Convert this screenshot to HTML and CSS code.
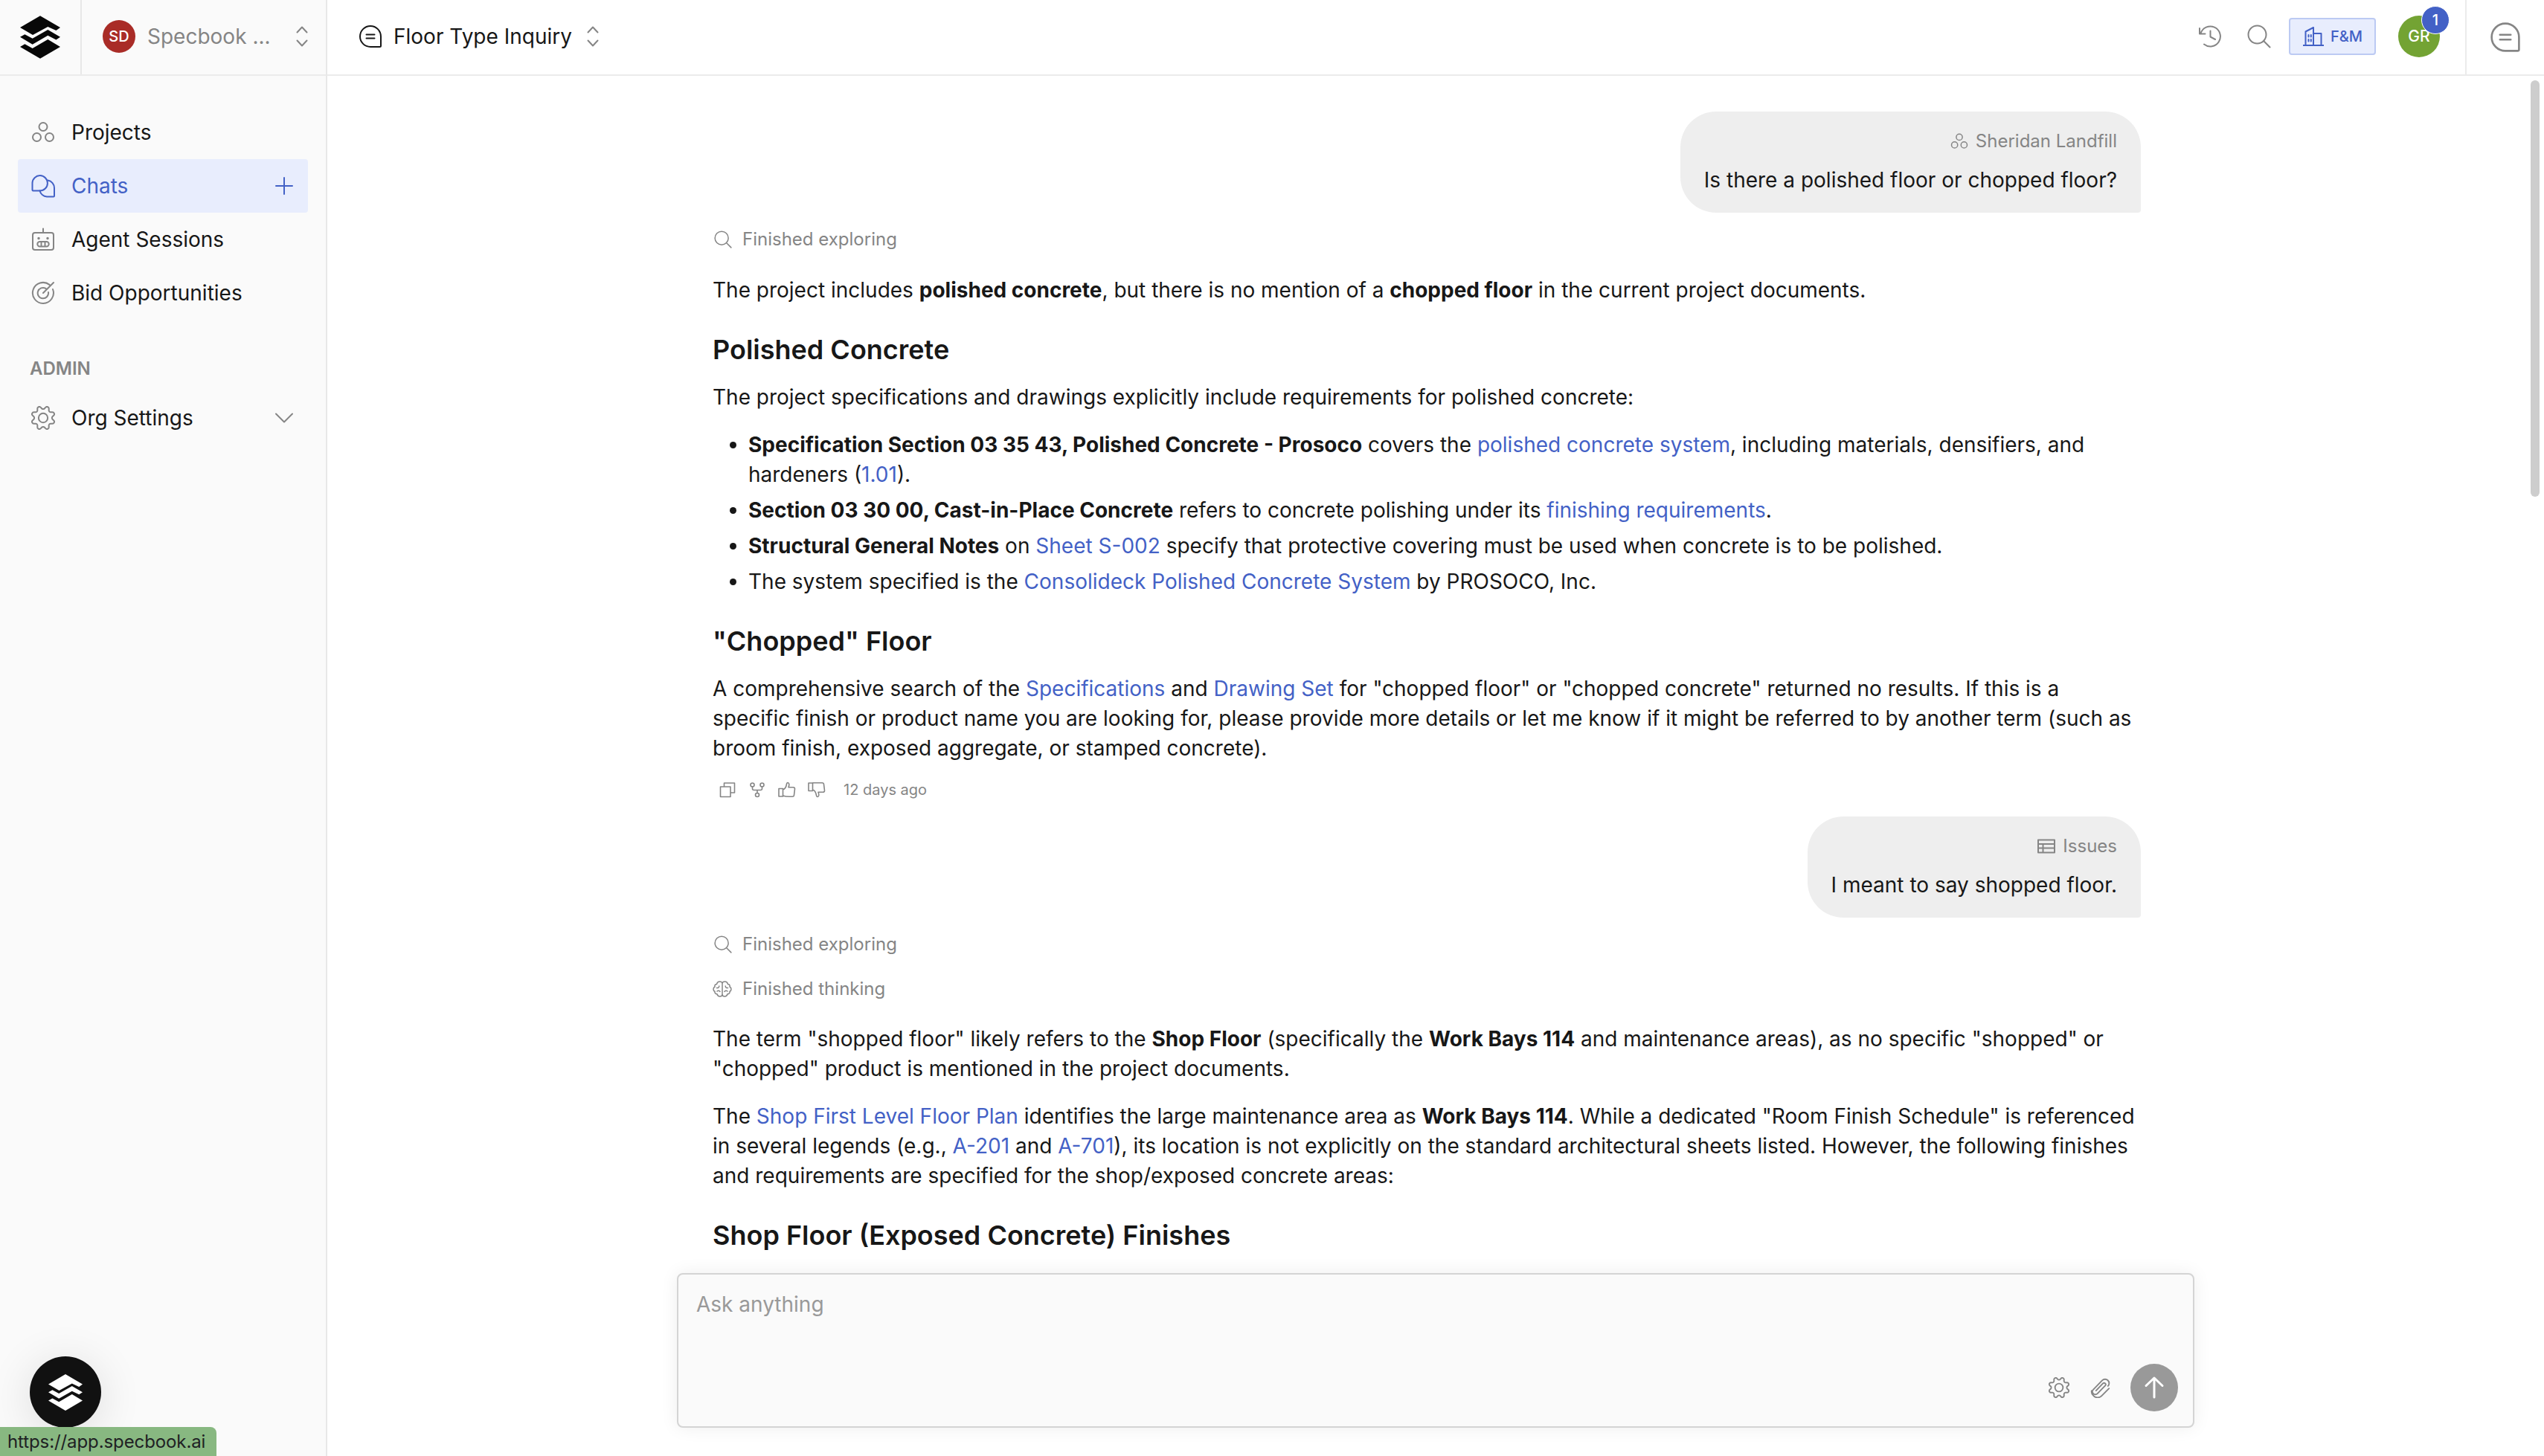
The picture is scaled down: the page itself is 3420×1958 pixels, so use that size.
FILE: index.html
```html
<!DOCTYPE html>
<html lang="en">
<head>
    <meta charset="UTF-8">
    <meta name="viewport" content="width=device-width, initial-scale=1.0">
    <title>Floor Type Inquiry - Specbook</title>
    <link rel="stylesheet" href="styles.css">
</head>
<body>
    <!-- Shared icons -->
    <svg class="sprite">
        <symbol id="logo" viewBox="0 0 136 145">
            <path d="M68 0l68 40-14 10-28-13-51 28L0 40z"/>
            <path d="M0 72l16-9 26 14 52-30 42 25-14 9-28-14-52 30z"/>
            <path d="M0 105l16-9 26 14 52-30 42 25-68 40z"/>
        </symbol>
        <symbol id="selector" viewBox="0 0 16 28">
            <path d="M1.5 8.500L8 1.500l6.500 7M1.500 19.500l6.500 7 6.500-7"/>
        </symbol>
        <symbol id="projects" viewBox="0 0 32 32">
            <circle cx="16" cy="8.500" r="5.500"/><circle cx="7.500" cy="22.500" r="5.500"/><circle cx="24.500" cy="22.500" r="5.500"/>
        </symbol>
        <symbol id="chat" viewBox="0 0 32 32">
            <path d="M2 16a14 14 0 0 1 28 0v12.500a1.500 1.500 0 0 1-1.500 1.500H16A14 14 0 0 1 2 16zM10.500 13.500h11M10.500 18.500h11"/>
        </symbol>
        <symbol id="search" viewBox="0 0 32 32">
            <circle cx="13.500" cy="13.500" r="12"/><path d="M22.300 22.300l8.200 8.200"/>
        </symbol>
        <symbol id="cog" viewBox="0 0 24 24">
            <circle cx="12" cy="12" r="4.600"/>
            <path d="M10.546 2.438a1.957 1.957 0 0 0 2.908 0L14.400 1.400a1.959 1.959 0 0 1 3.410 1.413l-.071 1.400a1.958 1.958 0 0 0 2.051 2.054l1.400-.071a1.959 1.959 0 0 1 1.410 3.410l-1.042.940a1.960 1.960 0 0 0 0 2.909l1.042.940a1.959 1.959 0 0 1-1.413 3.410l-1.400-.071a1.958 1.958 0 0 0-2.056 2.056l.071 1.400A1.959 1.959 0 0 1 14.400 22.600l-.941-1.041a1.959 1.959 0 0 0-2.908 0L9.606 22.600A1.959 1.959 0 0 1 6.200 21.192l.072-1.400a1.958 1.958 0 0 0-2.056-2.056l-1.400.071A1.958 1.958 0 0 1 1.400 14.400l1.041-.940a1.960 1.960 0 0 0 0-2.909L1.400 9.606A1.958 1.958 0 0 1 2.809 6.200l1.400.071a1.958 1.958 0 0 0 2.058-2.060L6.200 2.810A1.959 1.959 0 0 1 9.606 1.400z"/>
        </symbol>
    </svg>

    <div class="app">
        <!-- Sidebar -->
        <aside class="sidebar">
            <div class="sidebar-header">
                <a class="brand" href="#"><svg class="brand-logo"><use href="#logo"/></svg></a>
                <div class="org-switcher">
                    <span class="avatar avatar-org">SD</span>
                    <span class="org-name">Specbook ...</span>
                    <svg class="icon selector"><use href="#selector"/></svg>
                </div>
            </div>
            <nav class="nav">
                <a class="nav-item" href="#">
                    <svg class="icon nav-icon"><use href="#projects"/></svg>
                    <span>Projects</span>
                </a>
                <a class="nav-item active" href="#">
                    <svg class="icon nav-icon" viewBox="0 0 32 32">
                        <path d="M1.500 12a10.200 10.200 0 1 1 10.200 10.500H2.500a1 1 0 0 1-1-1z"/>
                        <path d="M22.300 8.500A10.500 10.500 0 0 1 31 19v10.500a1 1 0 0 1-1 1h-9a10.500 10.500 0 0 1-9.500-8"/>
                    </svg>
                    <span>Chats</span>
                    <svg class="icon nav-plus" viewBox="0 0 24 24"><path d="M12 1v22M1 12h22"/></svg>
                </a>
                <a class="nav-item" href="#">
                    <svg class="icon nav-icon" viewBox="0 0 32 32">
                        <rect x="2" y="7" width="28" height="23" rx="3"/>
                        <path d="M16 7V1.500M11.500 19h9a3.200 3.200 0 0 1 0 6.400h-9a3.200 3.200 0 0 1 0-6.400zM13.500 19v6M18.500 19v6"/>
                        <path class="dots" d="M10 14.500h.01M22 14.500h.01"/>
                    </svg>
                    <span>Agent Sessions</span>
                </a>
                <a class="nav-item" href="#">
                    <svg class="icon nav-icon" viewBox="0 0 32 32">
                        <path d="M24.500 4.900A14 14 0 1 0 29 11M19.500 9.900A7.200 7.200 0 1 0 23 15M16 16L30 2"/>
                    </svg>
                    <span>Bid Opportunities</span>
                </a>
                <div class="nav-heading">ADMIN</div>
                <a class="nav-item" href="#">
                    <svg class="icon nav-icon nav-cog"><use href="#cog"/></svg>
                    <span>Org Settings</span>
                    <svg class="icon nav-chevron" viewBox="0 0 24 14"><path d="M1 1.500l11 11 11-11"/></svg>
                </a>
            </nav>
        </aside>

        <main class="main">
            <!-- Top bar -->
            <header class="topbar">
                <div class="chat-title">
                    <svg class="icon chat-icon"><use href="#chat"/></svg>
                    <span>Floor Type Inquiry</span>
                    <svg class="icon selector"><use href="#selector"/></svg>
                </div>
                <div class="topbar-actions">
                    <svg class="icon" viewBox="0 0 32 32">
                        <path d="M3.500 12A13.500 13.500 0 1 1 8 26.500M2 5v7.500h7.500M16.500 8.500v8l6.500 3.500"/>
                    </svg>
                    <svg class="icon top-search"><use href="#search"/></svg>
                    <button class="fm-button">
                        <svg class="icon fm-icon" viewBox="0 0 28 26">
                            <path d="M.500 25h27M3.500 25V6.500L14 1v24M14 9h10.500v16M7.500 11v2.500M10.800 11v2.500M7.500 17v2.500M10.800 17v2.500"/>
                        </svg>
                        F&amp;M
                    </button>
                    <div class="avatar avatar-user">GR<span class="badge">1</span></div>
                </div>
                <div class="panel-toggle">
                    <svg class="icon panel-icon"><use href="#chat"/></svg>
                </div>
            </header>

            <!-- Conversation -->
            <div class="messages">
                <div class="thread">
                    <div class="bubble">
                        <div class="bubble-context">
                            <svg class="icon"><use href="#projects"/></svg>Sheridan Landfill
                        </div>
                        <div>Is there a polished floor or chopped floor?</div>
                    </div>

                    <div class="status"><svg class="icon"><use href="#search"/></svg>Finished exploring</div>

                    <div class="answer">
                        <p>The project includes <strong>polished concrete</strong>, but there is no mention of a <strong>chopped floor</strong> in the current project documents.</p>
                        <h2>Polished Concrete</h2>
                        <p>The project specifications and drawings explicitly include requirements for polished concrete:</p>
                        <ul>
                            <li><strong>Specification Section 03 35 43, Polished Concrete - Prosoco</strong> covers the <a href="#">polished concrete system</a>, including materials, densifiers, and hardeners (<a href="#">1.01</a>).</li>
                            <li><strong>Section 03 30 00, Cast-in-Place Concrete</strong> refers to concrete polishing under its <a href="#">finishing requirements</a>.</li>
                            <li><strong>Structural General Notes</strong> on <a href="#">Sheet S-002</a> specify that protective covering must be used when concrete is to be polished.</li>
                            <li>The system specified is the <a href="#">Consolideck Polished Concrete System</a> by PROSOCO, Inc.</li>
                        </ul>
                        <h2>"Chopped" Floor</h2>
                        <p>A comprehensive search of the <a href="#">Specifications</a> and <a href="#">Drawing Set</a> for "chopped floor" or "chopped concrete" returned no results. If this is a specific finish or product name you are looking for, please provide more details or let me know if it might be referred to by another term (such as broom finish, exposed aggregate, or stamped concrete).</p>
                    </div>

                    <div class="message-actions">
                        <svg class="icon" viewBox="0 0 24 24"><path d="M2.500 8h13.500v13.500H2.500zM7.500 8V3h14v13H16"/></svg>
                        <svg class="icon" viewBox="0 0 24 24">
                            <circle cx="5.500" cy="5.500" r="2.500"/><circle cx="18.500" cy="5.500" r="2.500"/><circle cx="12" cy="19" r="2.500"/>
                            <path d="M5.500 8v2.500a2 2 0 0 0 2 2h9a2 2 0 0 0 2-2V8M12 12.500v4"/>
                        </svg>
                        <svg class="icon" viewBox="0 0 24 24">
                            <path d="M1 10.500h5.500V21H1zM6.500 12c3-1 4.500-4.500 5-7.500.2-1.400.7-2.200 1.700-2 2 .4 2 3 .8 6.200h6.500a2 2 0 0 1 2 2.200l-1 8.300a2.200 2.200 0 0 1-2.200 2C14 21.500 10 21.500 6.500 20"/>
                        </svg>
                        <svg class="icon" viewBox="0 0 24 24">
                            <path d="M1 3h5.500v10.500H1zM6.500 12c3 1 4.500 4.500 5 7.500.2 1.400.7 2.200 1.700 2 2-.4 2-3 .8-6.200h6.500a2 2 0 0 0 2-2.200l-1-8.300a2.200 2.200 0 0 0-2.200-2H6.500"/>
                        </svg>
                        <span>12 days ago</span>
                    </div>

                    <div class="bubble">
                        <div class="bubble-context">
                            <svg class="icon" viewBox="0 0 24 24"><path d="M1 3.500h22v17H1zM1 9h22M1 14.500h22M7.500 9v11.500"/></svg>Issues
                        </div>
                        <div>I meant to say shopped floor.</div>
                    </div>

                    <div class="status"><svg class="icon"><use href="#search"/></svg>Finished exploring</div>
                    <div class="status status-thinking">
                        <svg class="icon brain" viewBox="0 0 26 22">
                            <path d="M13 4c0-2-1.500-3-3.500-3S6 2.500 5.500 4.500C3.500 4.500 2.500 6 3 8c-1.500.7-2 1.800-2 3.200s.8 2.600 2 3.100c-.5 2 .8 3.500 3 3.500.5 2 1.800 3.200 3.700 3.200 2 0 3.300-1.200 3.300-3zM13 4c0-2 1.500-3 3.500-3S20 2.500 20.500 4.500c2 0 3 1.500 2.500 3.500 1.500.7 2 1.800 2 3.200s-.8 2.600-2 3.100c.5 2-.8 3.500-3 3.500-.5 2-1.800 3.200-3.700 3.200-2 0-3.300-1.200-3.300-3z"/>
                            <path d="M5.500 9.500c2 .3 3.200-.6 3.300-2.500M20.500 9.500c-2 .3-3.200-.6-3.300-2.500M6 14c1.500-1.200 3-1 4 .5M20 14c-1.500-1.200-3-1-4 .5"/>
                        </svg>Finished thinking
                    </div>

                    <div class="answer answer-second">
                        <p>The term "shopped floor" likely refers to the <strong>Shop Floor</strong> (specifically the <strong>Work Bays 114</strong> and maintenance areas), as no specific "shopped" or "chopped" product is mentioned in the project documents.</p>
                        <p>The <a href="#">Shop First Level Floor Plan</a> identifies the large maintenance area as <strong>Work Bays 114</strong>. While a dedicated "Room Finish Schedule" is referenced in several legends (e.g., <a href="#">A-201</a> and <a href="#">A-701</a>), its location is not explicitly on the standard architectural sheets listed. However, the following finishes and requirements are specified for the shop/exposed concrete areas:</p>
                        <h2>Shop Floor (Exposed Concrete) Finishes</h2>
                    </div>
                </div>
            </div>

            <!-- Composer -->
            <div class="composer">
                <div class="composer-input">Ask anything</div>
                <div class="composer-actions">
                    <svg class="icon composer-icon"><use href="#cog"/></svg>
                    <svg class="icon composer-icon" viewBox="0 0 24 24">
                        <path d="M7.500 15.500l8-8.300a1.800 1.800 0 0 1 2.600 2.600l-9 9.200a3.300 3.300 0 0 1-4.700-4.700L14.600 3.800a4.600 4.600 0 0 1 6.700 6.400M22.500 13l-8.300 8.300a6.500 6.500 0 0 1-9.500.2 6 6 0 0 1-2.200-6"/>
                    </svg>
                    <button class="send">
                        <svg class="icon" viewBox="0 0 32 32"><path d="M16 29V3M5 13.500L16 3l11 10.500"/></svg>
                    </button>
                </div>
            </div>

            <div class="scrollbar"></div>
        </main>
    </div>

    <!-- Floating launcher and link preview -->
    <div class="launcher"><svg><use href="#logo"/></svg></div>
    <div class="link-status">https://app.specbook.ai</div>
</body>
</html>
```
FILE: styles.css
```css
* {
    box-sizing: border-box;
}

body {
    margin: 0;
    font-family: Inter, "Liberation Sans", sans-serif;
    font-size: 28px;
    line-height: 40px;
    color: #171717;
    background-color: #fff;
}

a {
    color: #4361c6;
    text-decoration: none;
}

button {
    font: inherit;
    padding: 0;
    border: none;
}

.sprite {
    display: none;
}

.icon {
    flex: none;
    width: 32px;
    height: 32px;
    fill: none;
    stroke: currentColor;
    stroke-width: 2;
    stroke-linecap: round;
    stroke-linejoin: round;
}

.app {
    display: flex;
    height: 1958px;
    overflow: hidden;
}

/* Sidebar */
.sidebar {
    flex: none;
    width: 440px;
    background-color: #fafafa;
    border-right: 2px solid #e8e8e8;
}

.sidebar-header {
    display: flex;
    height: 102px;
    border-bottom: 2px solid #ebebeb;
}

.brand {
    display: flex;
    align-items: center;
    justify-content: center;
    width: 110px;
    border-right: 2px solid #e8e8e8;
    padding-bottom: 1px;
}

.brand-logo {
    width: 54px;
    height: 58px;
    fill: #080808;
}

.org-switcher {
    flex: 1;
    min-width: 0;
    display: flex;
    align-items: center;
    padding: 0 24px 2px 28px;
    color: #858585;
}

.org-name {
    margin-left: 16px;
    white-space: nowrap;
}

.selector {
    width: 16px;
    height: 28px;
    margin-left: auto;
    color: #858585;
}

.avatar {
    flex: none;
    display: flex;
    align-items: center;
    justify-content: center;
    border-radius: 50%;
    color: #fff;
    font-weight: 500;
}

.avatar-org {
    width: 44px;
    height: 44px;
    font-size: 20px;
    background-color: #a92c27;
}

.nav {
    padding: 40px 24px;
}

.nav-item {
    display: flex;
    align-items: center;
    height: 72px;
    padding: 0 20px 0 18px;
    border-radius: 4px;
    color: #171717;
}

.nav-item.active {
    background-color: #e8edfd;
    color: #4361c6;
}

.nav-icon {
    margin-right: 22px;
    color: #858585;
}

.nav-cog {
    stroke-width: 1.5;
}

.active .nav-icon {
    color: inherit;
}

.dots {
    stroke-width: 3.5;
}

.nav-plus {
    width: 24px;
    height: 24px;
    margin-left: auto;
}

.nav-chevron {
    width: 24px;
    height: 14px;
    margin-left: auto;
    color: #858585;
}

.nav-heading {
    padding: 46px 16px 10px;
    font-size: 24px;
    font-weight: 600;
    color: #858585;
}

/* Main column */
.main {
    flex: 1;
    position: relative;
    display: flex;
    flex-direction: column;
    align-items: center;
}

.topbar {
    flex: none;
    display: flex;
    align-items: center;
    width: 100%;
    height: 102px;
    border-bottom: 2px solid #ebebeb;
}

.chat-title {
    display: flex;
    align-items: center;
    padding: 0 0 2px 42px;
}

.chat-icon {
    margin-right: 15px;
}

.chat-title .selector {
    margin-left: 20px;
}

.topbar-actions {
    display: flex;
    align-items: center;
    margin-left: auto;
    padding-bottom: 2px;
    color: #858585;
}

.top-search {
    margin: 0 24px 0 34px;
}

.fm-button {
    display: flex;
    align-items: center;
    gap: 9px;
    width: 117px;
    height: 50px;
    padding-left: 17px;
    border: 2px solid #bccaf3;
    border-radius: 4px;
    background-color: #e8edfd;
    color: #4361c6;
    font-size: 20px;
    font-weight: 500;
}

.fm-icon {
    width: 28px;
    height: 26px;
}

.avatar-user {
    position: relative;
    width: 56px;
    height: 56px;
    margin: 0 34px 0 30px;
    background-color: #73a333;
    font-size: 21px;
}

.badge {
    position: absolute;
    top: -13px;
    right: -13px;
    width: 38px;
    height: 38px;
    border: 1px solid #fff;
    border-radius: 50%;
    background-color: #4361c6;
    color: #fff;
    font-size: 20px;
    line-height: 36px;
    text-align: center;
}

.panel-toggle {
    display: flex;
    align-items: center;
    justify-content: center;
    width: 106px;
    height: 100px;
    border-left: 2px solid #ebebeb;
    color: #858585;
}

.panel-icon {
    width: 42px;
    height: 42px;
}

/* Conversation */
.messages {
    flex: none;
    width: 2040px;
    height: 1610px;
    padding: 48px 72px 0 48px;
    overflow: hidden;
}

.thread {
    display: flex;
    flex-direction: column;
    width: 1920px;
}

.bubble {
    align-self: flex-end;
    height: 136px;
    padding: 22px 32px;
    border-radius: 48px 48px 4px 48px;
    background-color: #eee;
}

.bubble-context {
    display: flex;
    align-items: center;
    justify-content: flex-end;
    gap: 10px;
    height: 36px;
    margin-bottom: 14px;
    font-size: 24px;
    color: #858585;
}

.bubble-context .icon {
    width: 24px;
    height: 24px;
}

.status {
    display: flex;
    align-items: center;
    height: 36px;
    margin: 18px 0 0 2px;
    gap: 14px;
    font-size: 24px;
    color: #858585;
}

.status .icon {
    width: 24px;
    height: 24px;
}

.status .brain {
    width: 26px;
    height: 22px;
    stroke-width: 1.5;
}

.status-thinking {
    margin: 24px 0 0;
}

.answer {
    padding-top: 30px;
}

.answer-second {
    padding-top: 29px;
}

.answer p,
.answer ul {
    margin: 0 0 24px;
}

.answer ul {
    padding-left: 48px;
}

.answer li + li {
    margin-top: 8px;
}

.answer h2 {
    margin: 36px 0 20px;
    font-size: 36px;
    line-height: 48px;
    font-weight: 600;
}

.answer strong {
    font-weight: 700;
}

.answer p:last-child {
    margin-bottom: 0;
}

.message-actions {
    display: flex;
    align-items: center;
    gap: 16px;
    height: 72px;
    padding-left: 8px;
    font-size: 20px;
    color: #858585;
}

.message-actions .icon {
    width: 24px;
    height: 24px;
    stroke-width: 1.6;
}

.message-actions span {
    margin-left: 8px;
}

/* Composer */
.composer {
    flex: none;
    display: flex;
    flex-direction: column;
    justify-content: space-between;
    width: 2040px;
    height: 208px;
    padding: 20px 20px 20px 24px;
    border: 2px solid #d4d4d4;
    border-radius: 8px;
    background-color: #fafafa;
    box-shadow: 0 0 24px rgba(0, 0, 0, 0.07);
}

.composer-input {
    color: #999;
}

.composer-actions {
    display: flex;
    align-items: center;
    justify-content: flex-end;
    color: #858585;
}

.composer-icon {
    width: 28px;
    height: 28px;
    margin-right: 27px;
    stroke-width: 1.6;
}

.send {
    display: flex;
    align-items: center;
    justify-content: center;
    width: 64px;
    height: 64px;
    border-radius: 50%;
    background-color: #999;
    color: #fff;
}

.send .icon {
    stroke-width: 3;
}

.scrollbar {
    position: absolute;
    top: 108px;
    right: 6px;
    width: 12px;
    height: 560px;
    border-radius: 6px;
    background-color: #cdcdcd;
}

/* Floating items in the bottom left corner */
.launcher {
    position: absolute;
    left: 40px;
    bottom: 38px;
    display: flex;
    align-items: center;
    justify-content: center;
    width: 96px;
    height: 96px;
    border-radius: 50%;
    background-color: #111;
    box-shadow: 0 8px 60px rgba(0, 0, 0, 0.12);
}

.launcher svg {
    width: 46px;
    height: 49px;
    fill: #fff;
}

.link-status {
    position: absolute;
    left: 0;
    bottom: 0;
    height: 39px;
    padding: 0 15px 0 10px;
    border-radius: 0 8px 0 0;
    background-color: #88b881;
    color: #1f2124;
    font-size: 24px;
    letter-spacing: -0.1px;
}
```
